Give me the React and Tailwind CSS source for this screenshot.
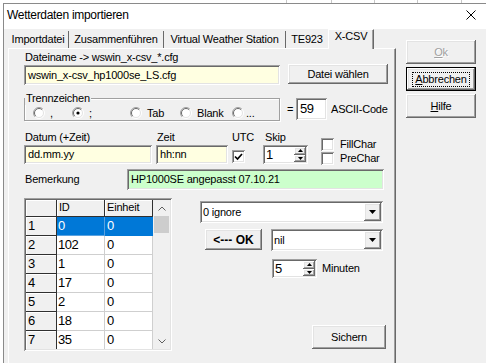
import React from 'react';

const raised =
  'shadow-[inset_-1px_-1px_#696969,inset_1px_1px_#ffffff,inset_-2px_-2px_#a0a0a0,inset_2px_2px_#e3e3e3]';
const sunken =
  'shadow-[inset_1px_1px_#a0a0a0,inset_-1px_-1px_#ffffff,inset_2px_2px_#696969,inset_-2px_-2px_#e3e3e3]';

const Btn = ({ children, className = '' }) => (
  <div className={`flex items-center justify-center bg-[#f0f0f0] ${raised} ${className}`}>{children}</div>
);

const Field = ({ children, className = '' }) => (
  <div className={`flex items-center pl-[4px] ${sunken} ${className}`}>{children}</div>
);

const TriDown = () => (
  <svg width="7" height="4" viewBox="0 0 7 4"><path d="M0 0h7L3.5 4z" fill="#000" /></svg>
);
const TriUp = () => (
  <svg width="5" height="3" viewBox="0 0 5 3"><path d="M0 3h5L2.5 0z" fill="#000" /></svg>
);
const TriSmallDown = () => (
  <svg width="5" height="3" viewBox="0 0 5 3"><path d="M0 0h5L2.5 3z" fill="#000" /></svg>
);

const Combo = ({ text, className = '' }) => (
  <div className={`flex p-[2px] bg-white ${sunken} ${className}`}>
    <div className="flex-1 pl-[1px] flex items-center">{text}</div>
    <Btn className="w-[17px] h-full">
      <TriDown />
    </Btn>
  </div>
);

const Spin = ({ value, className = '' }) => (
  <div className={`flex p-[2px] bg-white ${sunken} ${className}`}>
    <div className="flex-1 pl-[1px] flex items-center text-[13px] tracking-[-0.5px]">{value}</div>
    <div className="w-[12px] flex flex-col">
      <Btn className="flex-1"><TriUp /></Btn>
      <Btn className="flex-1"><TriSmallDown /></Btn>
    </div>
  </div>
);

const Check = ({ checked }) => (
  <div className={`w-[13px] h-[13px] bg-white flex items-center justify-center ${sunken}`}>
    {checked && (
      <svg width="9" height="9" viewBox="0 0 9 9">
        <path d="M1 4.5 L3.5 7 L8 2" stroke="#000" strokeWidth="1.7" fill="none" />
      </svg>
    )}
  </div>
);

const Radio = ({ checked }) => (
  <svg width="12" height="12" viewBox="0 0 12 12">
    <circle cx="6" cy="6" r="5" fill="#fff" />
    <path d="M2.1 9.9 A5.5 5.5 0 0 1 9.9 2.1" stroke="#a0a0a0" fill="none" />
    <path d="M2.8 9.2 A4.5 4.5 0 0 1 9.2 2.8" stroke="#696969" fill="none" />
    <path d="M9.9 2.1 A5.5 5.5 0 0 1 2.1 9.9" stroke="#fff" fill="none" />
    <path d="M9.2 2.8 A4.5 4.5 0 0 1 2.8 9.2" stroke="#e3e3e3" fill="none" />
    {checked && <circle cx="6" cy="6" r="1.6" fill="#000" />}
  </svg>
);

const rows = [
  ['1', '0', '0'],
  ['2', '102', '0'],
  ['3', '1', '0'],
  ['4', '17', '0'],
  ['5', '2', '0'],
  ['6', '18', '0'],
  ['7', '35', '0'],
];

const Grid = () => (
  <div className={`w-[148px] h-[153px] p-[2px] bg-[#f0f0f0] flex ${sunken}`}>
    <div className="flex-1 flex flex-col overflow-hidden">
      <div className="flex h-[17px] shrink-0">
        <div className="w-[31px] border-r border-b border-[#303030] shadow-[inset_1px_1px_#fff]" />
        <div className="w-[48px] border-r border-b border-[#303030] pl-[2px] leading-[15px] shadow-[inset_1px_1px_#fff]">ID</div>
        <div className="w-[48px] border-r border-b border-[#303030] pl-[2px] leading-[15px] shadow-[inset_1px_1px_#fff]">Einheit</div>
      </div>
      {rows.map(([n, id, e], i) => (
        <div key={n} className="flex h-[19px] shrink-0 text-[13px] tracking-[-0.5px]">
          <div className="w-[31px] border-r border-b border-[#303030] pl-[2px] leading-[18px] shadow-[inset_1px_1px_#fff]">{n}</div>
          <div className={`w-[48px] border-r border-b pl-[1px] leading-[18px] ${i === 0 ? 'bg-[#0078d7] text-white border-[#5aa2e0]' : 'bg-white border-[#cfcfcf]'}`}>{id}</div>
          <div className={`w-[48px] border-r border-b pl-[2px] leading-[18px] ${i === 0 ? 'bg-[#0078d7] text-white border-[#0078d7]' : 'bg-white border-[#cfcfcf]'}`}>{e}</div>
        </div>
      ))}
    </div>
    <div className="w-[17px] flex flex-col items-stretch">
      <div className="h-[16px] flex items-center justify-center">
        <svg width="8" height="5" viewBox="0 0 8 5"><path d="M0.5 4.5 L4 1 L7.5 4.5" stroke="#606060" fill="none" /></svg>
      </div>
      <div className="h-[17px] bg-[#cdcdcd] mx-[1px]" />
      <div className="flex-1" />
      <div className="h-[16px] flex items-center justify-center">
        <svg width="8" height="5" viewBox="0 0 8 5"><path d="M0.5 0.5 L4 4 L7.5 0.5" stroke="#606060" fill="none" /></svg>
      </div>
    </div>
  </div>
);

const Tab = ({ children, className = '' }) => (
  <div className={`h-[17px] pt-[2px] leading-[13px] text-center border-r border-[#696969] ${className}`}>{children}</div>
);

export default function App() {
  return (
    <div className="w-[486px] h-[363px] overflow-hidden bg-white text-black text-[11px] tracking-[-0.2px] font-['Liberation_Sans',Arial,sans-serif] flex flex-col">
      <div className="h-[3px] shrink-0 flex">
        <div className="ml-[286px] w-px bg-[#c8c8c8]" />
        <div className="ml-[44px] w-px bg-[#c8c8c8]" />
        <div className="ml-[42px] w-px bg-[#c8c8c8]" />
        <div className="ml-[42px] w-px bg-[#c8c8c8]" />
        <div className="ml-[43px] w-px bg-[#c8c8c8]" />
      </div>
      <div className="flex flex-1 min-h-0">
        <div className="w-[3px] shrink-0" />
        <div className="flex-1 flex flex-col border-l border-t border-[#8a8a8a] min-w-0">
          <div className="h-[25px] shrink-0 flex justify-between bg-white">
            <div className="pl-[3px] pt-[4px] text-[12px] leading-[14px] tracking-[-0.3px]">Wetterdaten importieren</div>
            <div className="pr-[10px] pt-[6px]">
              <svg width="10" height="10" viewBox="0 0 10 10">
                <path d="M0.5 0.5 L9.5 9.5 M9.5 0.5 L0.5 9.5" stroke="#000" strokeWidth="1" />
              </svg>
            </div>
          </div>
          <div className="flex-1 bg-[#f0f0f0] flex items-start pl-[4px]">
            <div className="w-[388px] h-full flex flex-col">
              <div className="h-[19px] flex items-end shrink-0">
                <Tab className="w-[61px]">Importdatei</Tab>
                <Tab className="w-[95px]">Zusammenführen</Tab>
                <Tab className="w-[122px]">Virtual Weather Station</Tab>
                <Tab className="w-[42px] border-r-0">TE923</Tab>
                <div className="relative z-10 w-[46px] h-[20px] -mb-[1px] leading-[13px] text-center bg-[#f0f0f0] border-l border-t border-white border-r border-r-[#696969] shadow-[inset_-1px_0_#a0a0a0]">X-CSV</div>
              </div>
              <div className="flex-1 flex flex-col pl-[15px] border-t border-l border-white border-r border-r-[#696969] shadow-[inset_-1px_0_#a0a0a0]">
                <div className="mt-[2px] h-[13px] leading-[13px] pl-[1px]">Dateiname -&gt; wswin_x-csv_*.cfg</div>
                <div className="flex h-[21px] items-start">
                  <Field className="mt-[1px] h-[20px] w-[256px] bg-[#ffffe1]">wswin_x-csv_hp1000se_LS.cfg</Field>
                  <Btn className="ml-[8px] w-[100px] h-[20px]">Datei wählen</Btn>
                </div>

                <div className="mt-[7px] flex items-start h-[29px]">
                  <div className="relative w-[256px] h-[29px]">
                    <div className="mt-[6px] h-[23px] border border-[#a0a0a0] shadow-[inset_1px_1px_#fff,1px_1px_#fff] flex items-start pt-[8px] pl-[8px]">
                      <div className="w-[39px] flex items-center gap-[5px] h-[12px]"><Radio /><span>,</span></div>
                      <div className="w-[58px] flex items-center gap-[5px] h-[12px]"><Radio checked /><span>;</span></div>
                      <div className="w-[50px] flex items-center gap-[5px] h-[12px]"><Radio /><span>Tab</span></div>
                      <div className="w-[52px] flex items-center gap-[5px] h-[12px]"><Radio /><span>Blank</span></div>
                      <div className="flex items-center gap-[2px] h-[12px]"><Radio /><span>...</span></div>
                    </div>
                    <div className="absolute top-0 left-[1px] px-[1px] bg-[#f0f0f0] leading-[13px]">Trennzeichen</div>
                  </div>
                  <div className="mt-[6px] h-[22px] flex items-center">
                    <span className="ml-[7px] w-[9px]">=</span>
                    <Field className="h-[22px] w-[31px] bg-white text-[13px] tracking-[-0.5px] pl-[3px]">59</Field>
                    <span className="ml-[4px]">ASCII-Code</span>
                  </div>
                </div>

                <div className="mt-[10px] flex items-start">
                  <div className="flex flex-col">
                    <div className="flex h-[14px] leading-[13px]">
                      <span className="w-[132px] pl-[1px]">Datum (+Zeit)</span>
                      <span className="w-[76px] pl-[1px]">Zeit</span>
                      <span className="w-[32px]">UTC</span>
                      <span className="pl-[1px]">Skip</span>
                    </div>
                    <div className="flex items-start h-[19px]">
                      <Field className="w-[128px] h-[19px] bg-[#ffffe1] pl-[3px]">dd.mm.yy</Field>
                      <Field className="ml-[4px] w-[72px] h-[19px] bg-[#ffffe1] pl-[3px]">hh:nn</Field>
                      <div className="ml-[4px] mt-[5px]"><Check checked /></div>
                      <Spin value="1" className="ml-[18px] w-[45px] h-[19px]" />
                    </div>
                  </div>
                  <div className="ml-[13px] mt-[7px] flex flex-col gap-[2px]">
                    <div className="flex items-center gap-[6px] h-[12px]"><Check /><span>FillChar</span></div>
                    <div className="flex items-center gap-[6px] h-[12px]"><Check /><span>PreChar</span></div>
                  </div>
                </div>

                <div className="mt-[5px] flex items-center h-[21px]">
                  <span className="w-[103px] pl-[1px]">Bemerkung</span>
                  <Field className="w-[257px] h-[21px] bg-[#ccffcc]">HP1000SE angepasst 07.10.21</Field>
                </div>

                <div className="mt-[8px] flex items-start">
                  <Grid />
                  <div className="ml-[28px] flex flex-col">
                    <Combo text="0 ignore" className="mt-[3px] w-[183px] h-[22px]" />
                    <div className="mt-[6px] flex items-start">
                      <Btn className="ml-[5px] w-[57px] h-[21px] font-bold text-[12px] tracking-normal">&lt;--- OK</Btn>
                      <Combo text="nil" className="ml-[9px] w-[112px] h-[22px]" />
                    </div>
                    <div className="mt-[8px] flex items-center">
                      <Spin value="5" className="ml-[72px] w-[45px] h-[19px]" />
                      <span className="ml-[5px]">Minuten</span>
                    </div>
                    <Btn className="mt-[47px] ml-[112px] w-[74px] h-[24px]">Sichern</Btn>
                  </div>
                </div>
              </div>
            </div>

            <div className="ml-[10px] mt-[11px] flex flex-col">
              <Btn className="w-[70px] h-[24px] text-[#a0a0a0] [text-shadow:1px_1px_#fff]">
                <span><span className="underline">O</span>k</span>
              </Btn>
              <div className="mt-[3px] w-[70px] h-[24px] border border-black">
                <Btn className="w-full h-full">
                  <span className="border border-dotted border-black px-[2px] leading-[13px]">
                    <span className="underline">A</span>bbrechen
                  </span>
                </Btn>
              </div>
              <Btn className="mt-[3px] w-[70px] h-[24px]">
                <span><span className="underline">H</span>ilfe</span>
              </Btn>
            </div>
          </div>
        </div>
      </div>
    </div>
  );
}
